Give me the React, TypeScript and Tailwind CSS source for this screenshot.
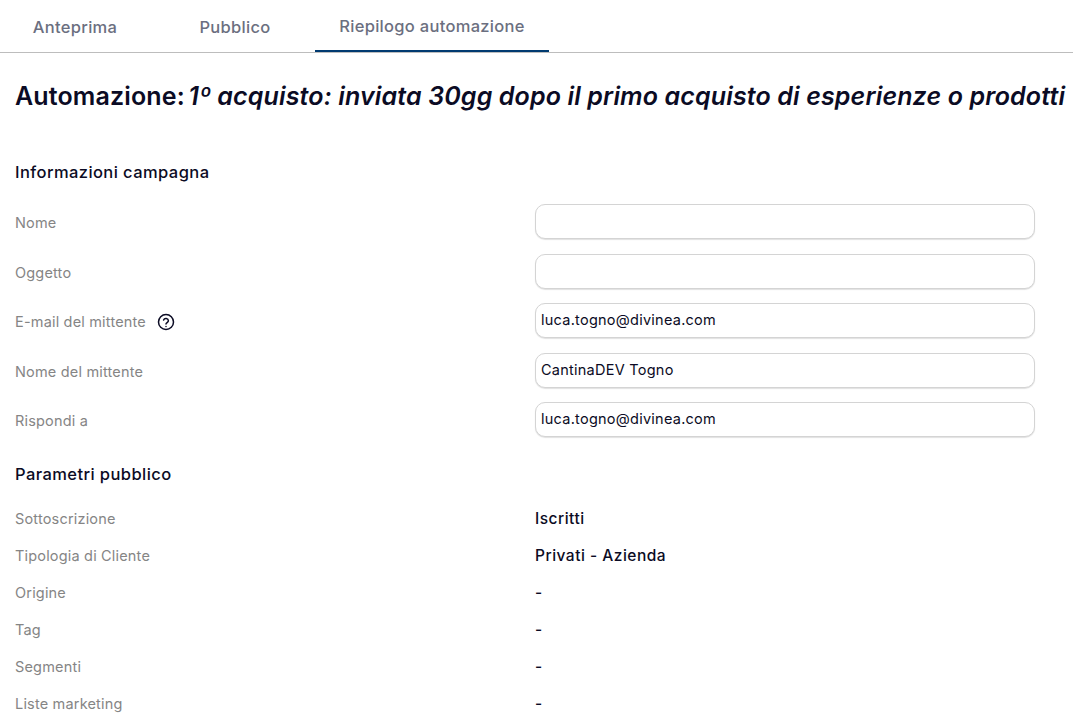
const font = { fontFamily: "Inter, sans-serif" };

const tabs = [
  { label: "Anteprima", className: "ml-2 w-[134px]" },
  { label: "Pubblico", className: "ml-[34px] w-[118px]" },
  { label: "Riepilogo automazione", className: "ml-[21px] w-[234px] border-b-2 border-[#003a70]" },
];

const campaignFields = [
  { label: "Nome", value: "" },
  { label: "Oggetto", value: "" },
  { label: "E-mail del mittente", value: "luca.togno@divinea.com", help: true },
  { label: "Nome del mittente", value: "CantinaDEV Togno" },
  { label: "Rispondi a", value: "luca.togno@divinea.com" },
];

const audienceRows = [
  { label: "Sottoscrizione", value: "Iscritti" },
  { label: "Tipologia di Cliente", value: "Privati - Azienda" },
  { label: "Origine", value: "-" },
  { label: "Tag", value: "-" },
  { label: "Segmenti", value: "-" },
  { label: "Liste marketing", value: "-" },
];

function HelpIcon() {
  return (
    <svg viewBox="0 0 24 24" className="ml-[11px] h-[18px] w-[18px] text-[#0b0b24]" fill="none" stroke="currentColor" strokeWidth={2} strokeLinecap="round">
      <circle cx="12" cy="12" r="10" />
      <path d="M8.8 9.4a3.3 3.3 0 0 1 6.4 1c0 2.2-3.2 2.6-3.2 4.4" />
      <path d="M12 18h.01" />
    </svg>
  );
}

export default function App() {
  return (
    <div className="h-[717px] w-[1073px] overflow-hidden bg-white" style={font}>
      {/* Tabs */}
      <div className="flex h-[53px] border-b border-[#bdbdbd]">
        {tabs.map((tab) => (
          <div key={tab.label} className={`flex h-[52px] items-center justify-center pt-[3px] text-[16.5px] font-medium tracking-[0.3px] text-[#6b6f80] ${tab.className}`}>
            {tab.label}
          </div>
        ))}
      </div>

      <div className="pl-[15px]">
        <h1 className="mt-[25px] h-[36px] whitespace-nowrap text-[25px] leading-[36px] font-semibold tracking-[0.14px] text-[#0b0b24]">
          Automazione: <em className="-ml-[3px] font-semibold">1º acquisto: inviata 30gg dopo il primo acquisto di esperienze o prodotti</em>
        </h1>

        {/* Informazioni campagna */}
        <h2 className="mt-[46px] h-[24px] text-[16.5px] leading-[24px] font-medium tracking-[0.42px] text-[#0b0b24]">Informazioni campagna</h2>
        <div className="mt-[20px] flex flex-col gap-[14.5px]">
          {campaignFields.map((field) => (
            <div key={field.label} className="flex h-[35px] items-center">
              <div className="flex w-[520px] items-center pt-[3px] text-[14.5px] tracking-[0.18px] text-[#858585]">
                {field.label}
                {field.help && <HelpIcon />}
              </div>
              <input
                readOnly
                value={field.value}
                className="h-[35px] w-[500px] rounded-[10px] border border-[#d4d4d4] bg-white px-[5px] pb-[2px] text-[14.5px] tracking-[0.25px] text-[#0b0b24] shadow-[0_1px_1px_rgba(0,0,0,0.12)] outline-none"
              />
            </div>
          ))}
        </div>

        {/* Parametri pubblico */}
        <h2 className="mt-[25px] h-[24px] text-[16.5px] leading-[24px] font-medium tracking-[0.42px] text-[#0b0b24]">Parametri pubblico</h2>
        <div className="mt-[14px] flex flex-col">
          {audienceRows.map((row) => (
            <div key={row.label} className="flex h-[37px] items-center">
              <div className="w-[520px] text-[14.5px] tracking-[0.18px] text-[#858585]">{row.label}</div>
              <div className="pt-[1px] text-[15.5px] font-medium tracking-[0.5px] text-[#0b0b24]">{row.value}</div>
            </div>
          ))}
        </div>
      </div>
    </div>
  );
}
